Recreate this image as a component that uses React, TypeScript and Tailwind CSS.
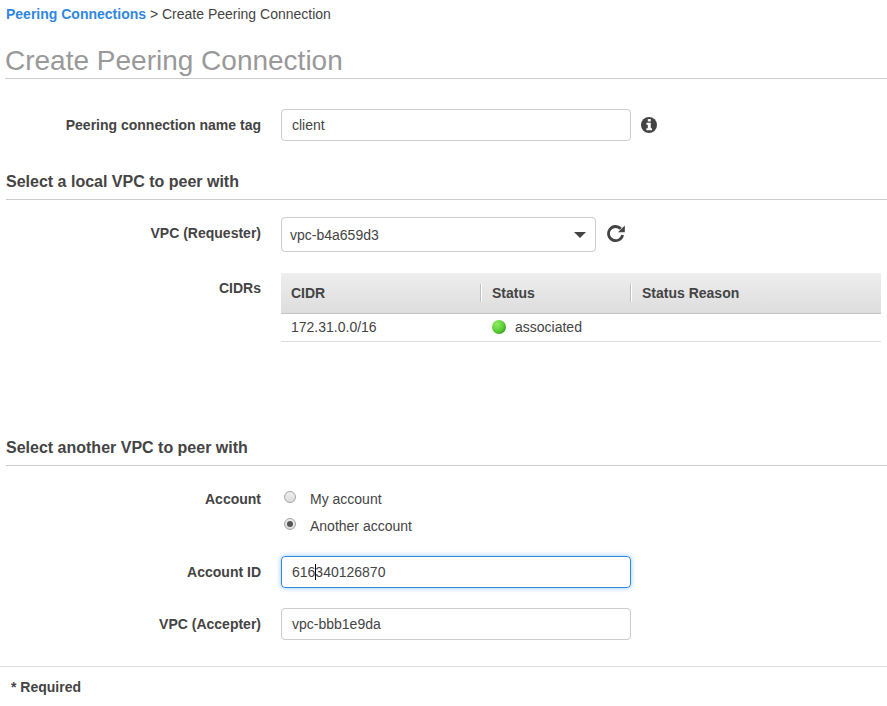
import type { ReactNode } from 'react';

function Row({ label, className = '', children }: { label: string; className?: string; children: ReactNode }) {
  return (
    <div className={`flex items-start ${className}`}>
      <div className="w-[261px] shrink-0 pt-2 text-right font-bold leading-4">{label}</div>
      <div className="ml-5 flex">{children}</div>
    </div>
  );
}

function Heading({ children }: { children: ReactNode }) {
  return <h2 className="ml-1.5 h-[28px] border-b border-[#ccc] pt-px text-[16px] font-bold leading-[18px]">{children}</h2>;
}

function Radio({ checked }: { checked?: boolean }) {
  return (
    <span className="-mt-1 mr-[14px] flex size-3 items-center justify-center rounded-full border border-[#a5a5a5] bg-linear-to-b from-[#eee] to-[#dcdcdc]">
      {checked && <span className="size-1.5 rounded-full bg-[#555]" />}
    </span>
  );
}

function Divider() {
  return <span className="mr-2.5 h-[18px] w-0.5 border-l border-r border-l-[#bfbfbf] border-r-white" />;
}

export default function App() {
  return (
    <div className="flex h-[706px] w-[887px] flex-col overflow-hidden bg-white font-['Liberation_Sans',Arial,sans-serif] text-[14px] leading-4 text-[#444]">
      <nav className="ml-1.5 mt-1.5 h-4 whitespace-pre"><span className="font-bold text-[#2f87df]">Peering Connections</span> &gt; Create Peering Connection</nav>
      <h1 className="ml-[5px] mt-[22px] h-[35px] border-b border-[#ccc] pt-px text-[28px] leading-8 text-[#999]">Create Peering Connection</h1>
      <Row label="Peering connection name tag" className="mt-[30px] h-8">
        <div className="flex h-8 w-[350px] items-center rounded-[4px] border border-[#ccc] px-2.5">client</div>
        <svg className="ml-2.5 mt-2 size-4" viewBox="0 0 16 16"><circle cx="8" cy="8" r="8" fill="#444" /><path d="M6.8 2h3v2.6h-3zM5.4 5.8h4.4v5.4H11v2H5.4v-2h1.4V7.8H5.4z" fill="white" /></svg>
      </Row>
      <div className="mt-[31px]"><Heading>Select a local VPC to peer with</Heading></div>
      <Row label="VPC (Requester)" className="mt-[17px] h-[35px]">
        <div className="flex h-[35px] w-[315px] items-center justify-between rounded-[4px] border border-[#ccc] pl-2 pr-[9px]">vpc-b4a659d3<span className="border-x-[6px] border-t-[6px] border-x-transparent border-t-[#444]" /></div>
        <svg className="ml-[11px] mt-[7px] size-[19px]" viewBox="0 0 19 19"><path d="M15.6 11A7.1 7.1 0 1 1 13.8 4.7" fill="none" stroke="#444" strokeWidth="2.8" /><path d="M17.8 1.4v6.8H11z" fill="#444" /></svg>
      </Row>
      <Row label="CIDRs" className="mt-5 h-[70px]">
        <div className="mt-px w-[600px]">
          <div className="flex h-[41px] items-center border-b border-[#c5c5c5] bg-linear-to-b from-[#eee] to-[#ddd] font-bold">
            <span className="w-[199px] pl-2.5">CIDR</span><span className="flex w-[150px] items-center"><Divider />Status</span><span className="flex items-center"><Divider />Status Reason</span>
          </div>
          <div className="flex h-7 items-center border-b border-[#ddd] pb-px"><span className="w-[211px] pl-2.5">172.31.0.0/16</span><span className="mr-[9px] size-3.5 rounded-full bg-radial-[at_35%_30%] from-[#91ed65] via-[#5cce37] to-[#1d820c]" />associated</div>
        </div>
      </Row>
      <div className="mt-[96px]"><Heading>Select another VPC to peer with</Heading></div>
      <Row label="Account" className="mt-[17px] h-[54px]">
        <div className="ml-[3px]"><div className="flex h-[27px] items-center pt-1"><Radio />My account</div><div className="flex h-[27px] items-center pt-1"><Radio checked />Another account</div></div>
      </Row>
      <Row label="Account ID" className="mt-[19px] h-8">
        <div className="flex h-8 w-[350px] items-center rounded-[4px] border border-[#2f87df] px-2.5 shadow-[0_0_5px_#8fc3f5]">616<span className="-mr-px h-4 w-px bg-black" />340126870</div>
      </Row>
      <Row label="VPC (Accepter)" className="mt-5 h-8">
        <div className="flex h-8 w-[350px] items-center rounded-[4px] border border-[#ccc] px-2.5">vpc-bbb1e9da</div>
      </Row>
      <footer className="mt-[26px] border-t border-[#ddd] pl-[11px] pt-3 font-bold">* Required</footer>
    </div>
  );
}
